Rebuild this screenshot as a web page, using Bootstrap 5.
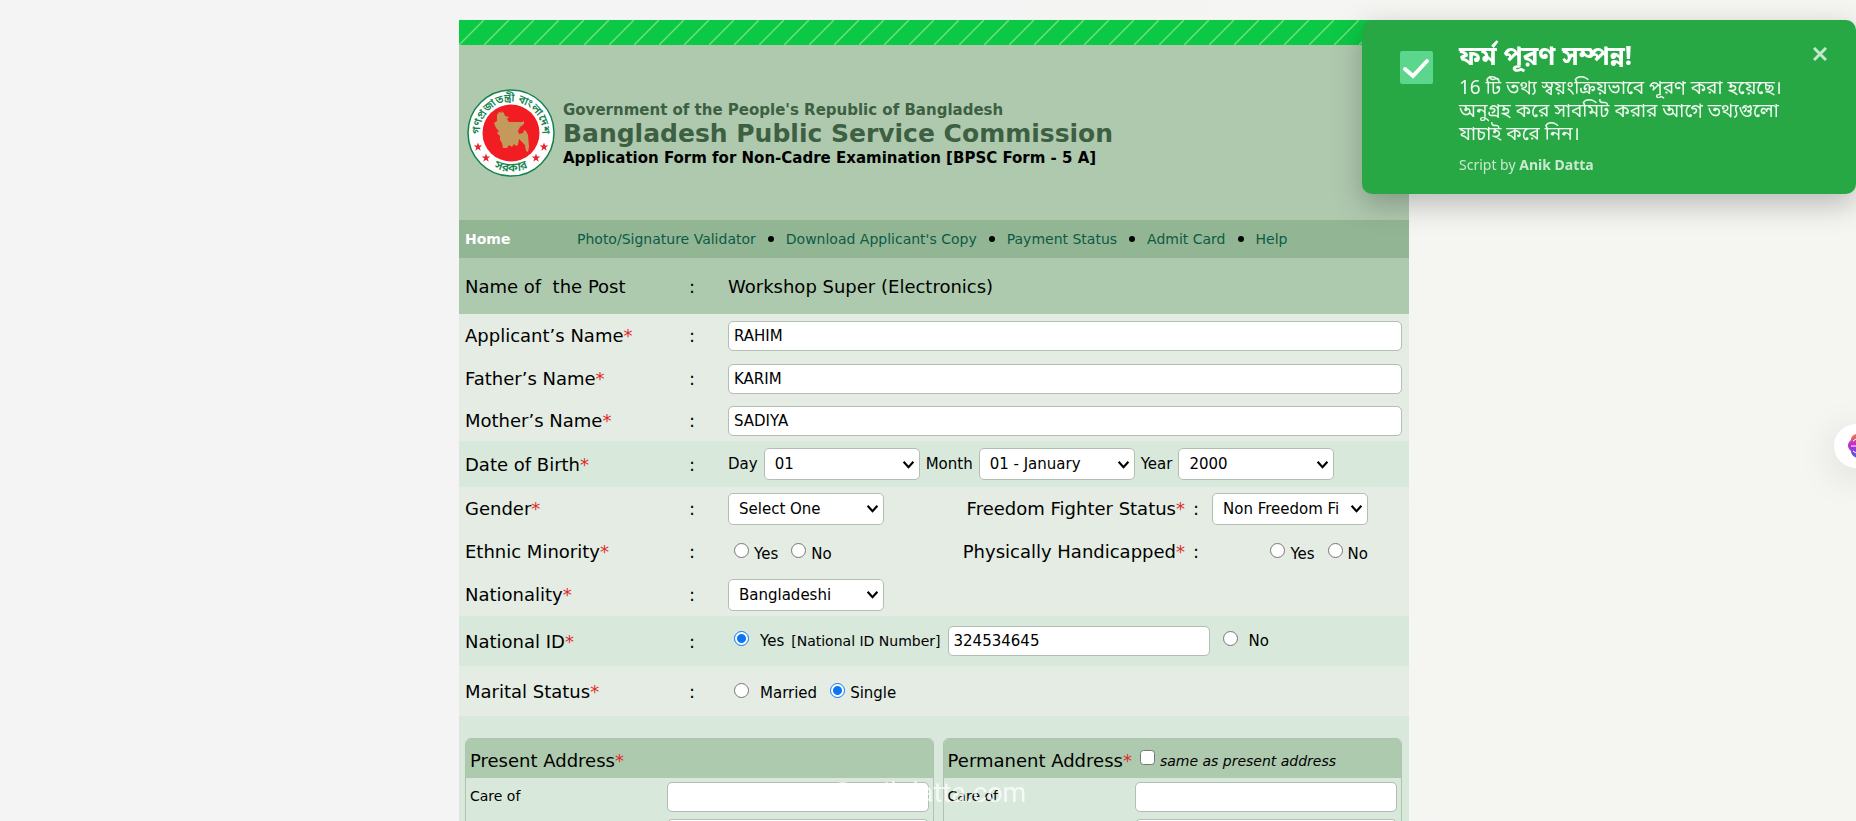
<!DOCTYPE html>
<html lang="en">
<head>
<meta charset="utf-8">
<meta name="viewport" content="width=device-width, initial-scale=1">
<title>Bangladesh Public Service Commission</title>
<link href="https://cdn.jsdelivr.net/npm/bootstrap@5.3.0/dist/css/bootstrap.min.css" rel="stylesheet">
<style>
  body { background: linear-gradient(90deg, #f4f4f4 50%, #f5f6f2 80%); color: #000; font-family: "DejaVu Sans", sans-serif; font-size: 15px; height: 100vh; overflow: hidden; padding: 20px 0 0 12px; }
  .sheet { max-width: 950px; background: #d8e8da; }
  .hatch { height: 25px; background: #0bc945; display: block; width: 100%; }
  .masthead { background: #afc9af; height: 175px; padding: 0 8px; }
  .org { font-weight: 700; color: #3d5f42; font-size: 15px; line-height: 20px; padding-top: 2px; }
  .org-name { font-size: 25px; line-height: 28px; }
  .org-form { color: #000; }
  .menu { background: #92b694; height: 38px; padding: 0 6px; font-size: 14px; }
  .menu a { color: #0c5a44; text-decoration: none; }
  .menu .home { color: #fff; font-weight: 700; width: 112px; }
  .menu .dot { width: 6px; height: 6px; border-radius: 3px; background: #000; margin: 0 4px; }
  .line { display: flex; align-items: center; padding: 0 7px 0 6px; height: 43px; }
  .cap { width: 224px; font-size: 18px; }
  .colon { width: 39px; font-size: 18px; }
  .req { color: #e02b2b; }
  .pale { background: #e4ece3; }
  .line.post { background: #aecaae; height: 56px; font-size: 18px; }
  .line.h41 { height: 41px; } .line.h46 { height: 46px; } .line.h50 { height: 50px; }
  .sheet .form-control, .sheet .form-select { border: 1px solid #b3bfb3; border-radius: 5px; color: #000; font-size: 15px; line-height: 20px; }
  .sheet .form-control { height: 30px; padding: 0 5px; }
  .sheet .form-select { width: 156px; height: 32px; padding: 0 28px 0 10px; background-position: right 4px center; background-size: 13px 13px;
    background-image: url("data:image/svg+xml,%3csvg xmlns='http://www.w3.org/2000/svg' viewBox='0 0 12 12'%3e%3cpath fill='none' stroke='%23000' stroke-width='2' d='M1.500 3.500 6 8.500 10.500 3.500'/%3e%3c/svg%3e"); }
  .sheet .form-check-input { width: 15px; height: 15px; margin: 0; border: 1px solid #767676; flex: none; }
  .sheet .form-check-input:checked[type=radio] { background: radial-gradient(circle, #0b76f5 0 4px, #fff 5px); border-color: #0b76f5; }
  .choice { display: flex; align-items: center; gap: 5px; line-height: 20px; }
  .choice .form-check-input { margin-bottom: 6px; }
  .low { padding-top: 4px; }
  .choice.roomy { gap: 11px; }
  .options { display: flex; align-items: center; gap: 13px; padding-left: 6px; }
  .dob { display: flex; align-items: center; gap: 6px; }
  .nid { display: flex; align-items: center; gap: 7px; padding-left: 6px; white-space: nowrap; }
  .nid .form-control { width: 262px; margin-right: 6px; }
  .nid .hint { font-size: 14px; }
  .side { margin: 0 34px 0 auto; display: flex; align-items: center; font-size: 18px; }
  .side .sep { width: 27px; padding-left: 8px; }
  .side .sidefield { width: 156px; display: flex; justify-content: flex-end; gap: 13px; font-size: 15px; }
  .addresses { padding: 22px 7px 0 6px; display: grid; grid-template-columns: 51fr 50fr; gap: 9px; }
  .addr { border: 1px solid #afc4b0; border-radius: 6px; overflow: hidden; }
  .addr-head { background: #aecaae; height: 39px; padding: 4px 4px 0; font-size: 18px; display: flex; align-items: center; gap: 8px; }
  .addr-head .choice { font-size: 14px; }
  .addr-row { height: 37px; padding: 0 4px; display: flex; align-items: center; justify-content: space-between; font-size: 14px; }
  .addr-row .form-control { width: 262px; }
  .notice { position: fixed; top: 20px; right: 0; width: 494px; height: 174px; padding: 17px 28px 0 38px; background: #28a745; color: #fff; border-radius: 10px; box-shadow: 0 10px 30px rgba(0,0,0,.25); font-family: "Noto Sans", "Noto Sans Bengali", sans-serif; }
  .notice h2 { font-size: 26px; line-height: 36px; font-weight: 700; margin: 0; }
  .notice p { font-size: 19px; line-height: 23px; margin: 3px 0 0; opacity: .92; white-space: nowrap; }
  .notice small { font-size: 14px; line-height: 20px; display: block; margin-top: 10px; opacity: .75; }
  .notice .tick { flex: none; width: 59px; height: 60px; }
  .close-x { position: absolute; right: 29px; top: 27px; padding: 0; border: 0; background: none; line-height: 0; }
  .bubble { position: fixed; right: -22px; top: 424px; width: 44px; height: 44px; padding: 0 0 0 14px; border: 0; border-radius: 50%; background: #fff; box-shadow: 0 8px 40px rgba(0,0,0,.12); text-align: left; line-height: 0; }
  .stamp { position: fixed; left: 0; right: 0; bottom: 12px; text-align: center; color: rgba(255,255,255,.75); font: 27px/32px Roboto, sans-serif; pointer-events: none; }
</style>
</head>
<body>
<main class="sheet mx-auto">
  <svg class="hatch" aria-hidden="true"><defs><pattern id="h" width="25" height="25" patternUnits="userSpaceOnUse"><path d="M0 25 25 0" stroke="#6fe07c" stroke-width="1.500"/></pattern></defs><rect width="100%" height="25" fill="url(#h)"/></svg>
  <header class="masthead d-flex align-items-center gap-2">
    <svg width="88" height="88" viewBox="0 0 88 88" role="img" aria-label="Government seal">
      <defs><path id="arcTop" d="M15.600 56a31 31 0 1 1 56.800 0"/><path id="arcBottom" d="M5.500 44a38.500 38.500 0 0 0 77 0"/><path id="star" d="M0-4.500 1.100-1.400 4.300-1.400 1.700.6 2.700 3.700 0 1.800-2.700 3.700-1.700.6-4.300-1.400-1.100-1.400z" fill="#e8242c"/></defs>
      <circle cx="44" cy="44" r="43" fill="#fff" stroke="#16834f" stroke-width="1.500"/>
      <circle cx="44" cy="44" r="28.500" fill="#f21d22"/>
      <path fill="#c49a5c" d="m30 26 2-3 3 1-1-2 3 2 1 3 4 1-2 2 2 3 13 0 2-1 0 3-4 3-2 4 1 3 4-1 1-3 2 1 2 4 1 12-1 5-2-1-1-6-3-3-3-3-1 6-2 1-2-2-2 3-3-2-2 3-4 0-1-5-2-3 0-4-3-3 2-2-3-3-2-5 3-2z"/>
      <g fill="#16834f" font-family="Noto Sans Bengali, Noto Sans, sans-serif" font-weight="600" text-anchor="middle"><text font-size="11"><textPath href="#arcTop" startOffset="50%">গণপ্রজাতন্ত্রী বাংলাদেশ</textPath></text><text font-size="12"><textPath href="#arcBottom" startOffset="50%">সরকার</textPath></text></g>
      <use href="#star" x="11" y="58"/><use href="#star" x="19" y="69"/><use href="#star" x="69" y="69"/><use href="#star" x="77" y="58"/>
    </svg>
    <div class="org">
      <div>Government of the People's Republic of Bangladesh</div>
      <div class="org-name">Bangladesh Public Service Commission</div>
      <div class="org-form">Application Form for Non-Cadre Examination [BPSC Form - 5 A]</div>
    </div>
  </header>
  <nav class="menu d-flex align-items-center">
    <a class="home" href="#">Home</a>
    <div class="d-flex align-items-center gap-2">
      <a href="#">Photo/Signature Validator</a><span class="dot"></span>
      <a href="#">Download Applicant's Copy</a><span class="dot"></span>
      <a href="#">Payment Status</a><span class="dot"></span>
      <a href="#">Admit Card</a><span class="dot"></span>
      <a href="#">Help</a>
    </div>
  </nav>
  <form>
    <div class="line post"><span class="cap">Name of &nbsp;the Post</span><span class="colon">:</span><span>Workshop Super (Electronics)</span></div>
    <div class="pale">
      <div class="line"><label class="cap" for="an">Applicant’s Name<span class="req">*</span></label><span class="colon">:</span><input class="form-control flex-fill w-auto" id="an" value="RAHIM"></div>
      <div class="line"><label class="cap" for="fn">Father’s Name<span class="req">*</span></label><span class="colon">:</span><input class="form-control flex-fill w-auto" id="fn" value="KARIM"></div>
      <div class="line h41"><label class="cap" for="mn">Mother’s Name<span class="req">*</span></label><span class="colon">:</span><input class="form-control flex-fill w-auto" id="mn" value="SADIYA"></div>
    </div>
    <div class="line h46"><span class="cap">Date of Birth<span class="req">*</span></span><span class="colon">:</span>
      <div class="dob"><label for="dd">Day</label><select class="form-select" id="dd"><option>01</option></select><label for="mm">Month</label><select class="form-select" id="mm"><option>01 - January</option></select><label for="yy">Year</label><select class="form-select" id="yy"><option>2000</option></select></div>
    </div>
    <div class="pale">
      <div class="line"><label class="cap" for="gn">Gender<span class="req">*</span></label><span class="colon">:</span><select class="form-select" id="gn"><option>Select One</option></select>
        <div class="side"><label for="ff">Freedom Fighter Status<span class="req">*</span></label><span class="sep">:</span><div class="sidefield"><select class="form-select" id="ff"><option>Non Freedom Fighter</option></select></div></div></div>
      <div class="line"><span class="cap">Ethnic Minority<span class="req">*</span></span><span class="colon">:</span>
        <div class="options low"><label class="choice"><input class="form-check-input" type="radio" name="em">Yes</label><label class="choice"><input class="form-check-input" type="radio" name="em">No</label></div>
        <div class="side"><span>Physically Handicapped<span class="req">*</span></span><span class="sep">:</span><div class="sidefield low"><label class="choice"><input class="form-check-input" type="radio" name="ph">Yes</label><label class="choice"><input class="form-check-input" type="radio" name="ph">No</label></div></div></div>
      <div class="line"><label class="cap" for="nt">Nationality<span class="req">*</span></label><span class="colon">:</span><select class="form-select" id="nt"><option>Bangladeshi</option></select></div>
    </div>
    <div class="line h50"><span class="cap">National ID<span class="req">*</span></span><span class="colon">:</span>
      <div class="nid"><label class="choice roomy"><input class="form-check-input" type="radio" name="ni" checked>Yes</label><label class="hint" for="nid">[National ID Number]</label><input class="form-control" id="nid" value="324534645"><label class="choice roomy"><input class="form-check-input" type="radio" name="ni">No</label></div>
    </div>
    <div class="line h50 pale"><span class="cap">Marital Status<span class="req">*</span></span><span class="colon">:</span>
      <div class="options low"><label class="choice roomy"><input class="form-check-input" type="radio" name="ms">Married</label><label class="choice"><input class="form-check-input" type="radio" name="ms" checked>Single</label></div>
    </div>
    <div class="addresses">
      <section class="addr"><div class="addr-head"><span>Present Address<span class="req">*</span></span></div>
        <div class="addr-row"><label for="c1">Care of</label><input class="form-control" id="c1"></div>
        <div class="addr-row justify-content-end"><input class="form-control" aria-label="Present village or road"></div></section>
      <section class="addr"><div class="addr-head"><span>Permanent Address<span class="req">*</span></span><label class="choice"><input class="form-check-input" type="checkbox"><i>same as present address</i></label></div>
        <div class="addr-row"><label for="c2">Care of</label><input class="form-control" id="c2"></div>
        <div class="addr-row justify-content-end"><input class="form-control" aria-label="Permanent village or road"></div></section>
    </div>
  </form>
</main>
<div class="stamp">@anikdatta.com</div>
<button class="bubble" type="button" aria-label="Assistant">
  <svg width="22" height="44" viewBox="0 0 22 44"><defs><linearGradient id="g" x2="0" y2="1"><stop stop-color="#f5813c"/><stop offset=".45" stop-color="#c12ccb"/><stop offset="1" stop-color="#4b5cf0"/></linearGradient></defs><path d="M12 10C7 9 3 12 3 16c-4 3-4 8 0 11 0 4 4 8 9 6z" fill="url(#g)"/><path d="M3 22h9M5 17l3-2M5 27l3 2" stroke="#fff" fill="none"/></svg>
</button>
<aside class="notice d-flex" role="status">
  <svg class="tick" viewBox="0 0 59 60"><rect y="14" width="33" height="33" rx="2" fill="#5bd68c"/><path d="M5 32 13 39 27 24" fill="none" stroke="#fff" stroke-width="4" stroke-linecap="round"/></svg>
  <div lang="bn"><h2>ফর্ম পূরণ সম্পন্ন!</h2><p>16 টি তথ্য স্বয়ংক্রিয়ভাবে পূরণ করা হয়েছে।<br>অনুগ্রহ করে সাবমিট করার আগে তথ্যগুলো<br>যাচাই করে নিন।</p><small>Script by <b>Anik Datta</b></small></div>
  <button class="close-x" type="button" aria-label="Close"><svg width="14" height="14" viewBox="0 0 14 14"><path d="m1 1 12 12M13 1 1 13" stroke="#c4e8cd" stroke-width="3"/></svg></button>
</aside>
<script src="https://cdn.jsdelivr.net/npm/bootstrap@5.3.0/dist/js/bootstrap.bundle.min.js"></script>
</body>
</html>
